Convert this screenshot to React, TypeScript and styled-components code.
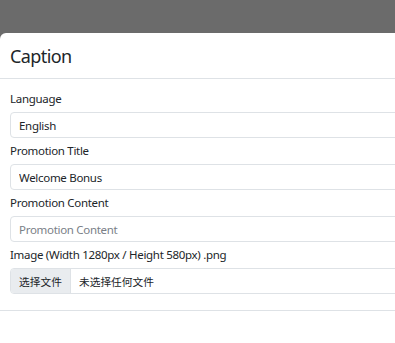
import React, { FC } from "react";
import styled, { createGlobalStyle } from "styled-components";

const GlobalStyle = createGlobalStyle`
  html, body {
    margin: 0;
    padding: 0;
    background: #6b6b6b;
    overflow: hidden;
  }
  body {
    font-family: "Noto Sans", "Noto Sans CJK SC", sans-serif;
    color: #212529;
  }
`;

const Backdrop = styled.div`
  height: 343px;
  padding-top: 33px;
  box-sizing: border-box;
`;

const Modal = styled.div`
  width: 395px;
  height: 310px;
  background: #fff;
  border-top-left-radius: 6px;
  display: flex;
  flex-direction: column;
`;

const Header = styled.div`
  height: 45px;
  padding: 1px 10px 0;
  box-sizing: border-box;
  display: flex;
  align-items: center;
  border-bottom: 1px solid #dee2e6;
  height: 46px;
`;

const Title = styled.div`
  font-size: 18px;
  letter-spacing: -0.6px;
  font-weight: 400;
  line-height: 1;
`;

const Body = styled.div`
  padding: 7px 0 16px 10px;
  border-bottom: 1px solid #dee2e6;
`;

const Field = styled.div`
  display: flex;
  flex-direction: column;
`;

const Label = styled.label`
  font-size: 11.5px;
  letter-spacing: -0.3px;
  line-height: 18px;
  margin: 4px 0;
`;

const Input = styled.input`
  height: 26px;
  margin-right: -20px;
  box-sizing: border-box;
  border: 1px solid #dee2e6;
  border-radius: 4px;
  padding: 0 8px;
  font-family: inherit;
  font-size: 11.5px;
  letter-spacing: -0.3px;
  color: #212529;
  outline: none;
  &::placeholder {
    color: #7a8087;
  }
`;

const FileBox = styled.div`
  height: 26px;
  margin-right: -20px;
  box-sizing: border-box;
  border: 1px solid #dee2e6;
  border-radius: 4px;
  display: flex;
  align-items: stretch;
  overflow: hidden;
  font-size: 10.7px;
`;

const FileButton = styled.span`
  width: 59px;
  display: flex;
  align-items: center;
  justify-content: center;
  background: #e9ecef;
  border-right: 1px solid #dee2e6;
`;

const FileName = styled.span`
  display: flex;
  align-items: center;
  padding-left: 8px;
`;

const App: FC = () => {
  return (
    <>
      <GlobalStyle />
      <Backdrop>
        <Modal>
          <Header>
            <Title>Caption</Title>
          </Header>
          <Body>
            <Field>
              <Label>Language</Label>
              <Input readOnly value="English" />
            </Field>
            <Field>
              <Label>Promotion Title</Label>
              <Input readOnly value="Welcome Bonus" />
            </Field>
            <Field>
              <Label>Promotion Content</Label>
              <Input placeholder="Promotion Content" />
            </Field>
            <Field>
              <Label>Image (Width 1280px / Height 580px) .png</Label>
              <FileBox>
                <FileButton>选择文件</FileButton>
                <FileName>未选择任何文件</FileName>
              </FileBox>
            </Field>
          </Body>
        </Modal>
      </Backdrop>
    </>
  );
};

export default App;
